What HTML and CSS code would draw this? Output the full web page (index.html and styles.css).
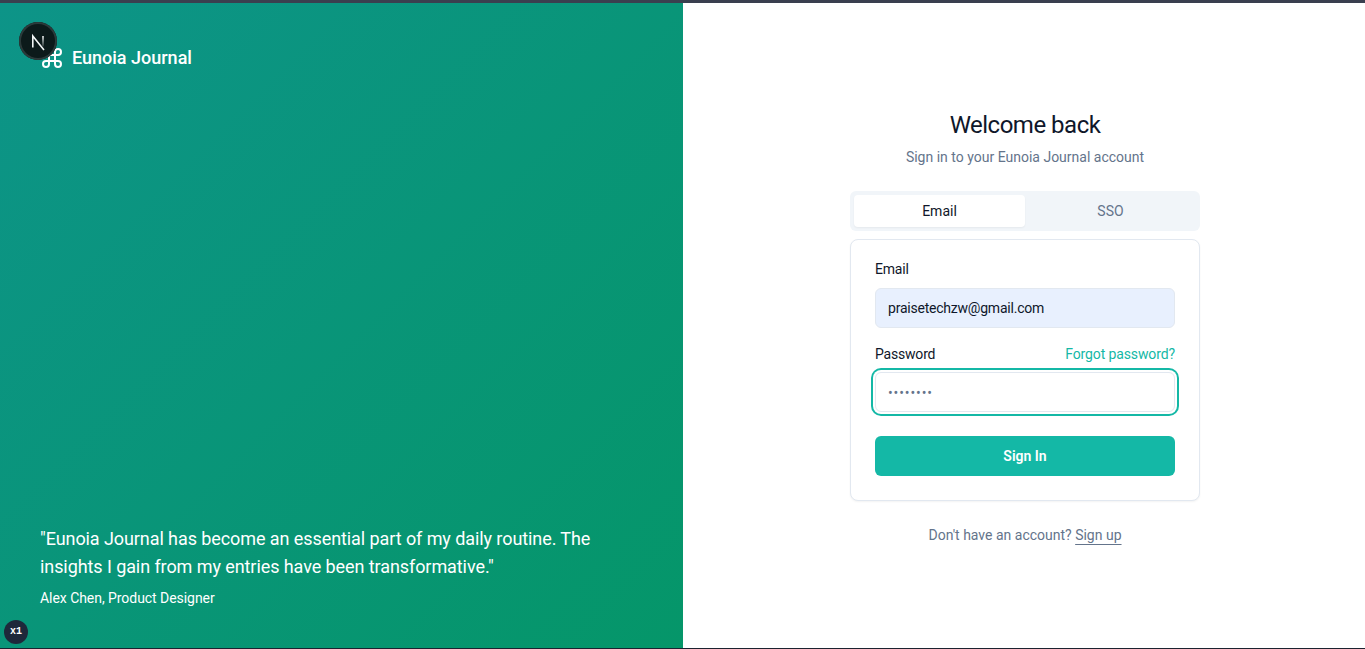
FILE: index.html
```
<!DOCTYPE html>
<html lang="en">
<head>
    <meta charset="UTF-8">
    <meta name="viewport" content="width=device-width, initial-scale=1.0">
    <title>Sign In - Eunoia Journal</title>
    <link rel="stylesheet" href="styles.css">
</head>
<body>
    <div class="page">
        <aside class="hero">
            <div class="brand">
                <svg class="brand-icon" viewBox="0 0 24 24" fill="none" stroke="currentColor" stroke-width="2" stroke-linecap="round" stroke-linejoin="round">
                    <path d="M15 6v12a3 3 0 1 0 3-3H6a3 3 0 1 0 3 3V6a3 3 0 1 0-3 3h12a3 3 0 1 0-3-3"></path>
                </svg>
                <span>Eunoia Journal</span>
            </div>
            <blockquote class="quote">
                <p>"Eunoia Journal has become an essential part of my daily routine. The insights I gain from my entries have been transformative."</p>
                <footer>Alex Chen, Product Designer</footer>
            </blockquote>
        </aside>
        <main class="panel">
            <div class="login">
                <h1>Welcome back</h1>
                <p class="sub">Sign in to your Eunoia Journal account</p>
                <div class="tabs">
                    <button class="tab active">Email</button>
                    <button class="tab">SSO</button>
                </div>
                <form class="card">
                    <label class="label" for="email">Email</label>
                    <input class="input filled" id="email" type="email" value="praisetechzw@gmail.com">
                    <div class="label-row">
                        <label class="label" for="password">Password</label>
                        <a class="forgot" href="#">Forgot password?</a>
                    </div>
                    <input class="input focused" id="password" type="password" value="password">
                    <button class="submit" type="button">Sign In</button>
                </form>
                <p class="signup">Don't have an account? <a href="#">Sign up</a></p>
            </div>
        </main>
    </div>
    <button class="next-badge" aria-label="Next.js dev tools">
        <svg viewBox="0 0 38 38" fill="none" stroke-width="1.6">
            <defs>
                <linearGradient id="next-fade" x1="0" y1="0" x2="0" y2="1">
                    <stop offset="0" stop-color="#f2f6f6"></stop>
                    <stop offset="1" stop-color="#f2f6f6" stop-opacity="0.15"></stop>
                </linearGradient>
            </defs>
            <path d="M13.8 25.5V14L25 28" stroke="#f2f6f6"></path>
            <rect x="23.2" y="14" width="1.6" height="10.5" fill="url(#next-fade)" stroke="none"></rect>
        </svg>
    </button>
    <div class="zoom-badge">x1</div>
</body>
</html>
```

FILE: styles.css
```
* {
    box-sizing: border-box;
}
html, body {
    height: 100%;
}
body {
    margin: 0;
    border-top: 3px solid #3a3f4f;
    border-bottom: 1px solid #1c2230;
    font-family: Roboto, "Noto Sans", sans-serif;
    color: #0f172a;
    background: #fff;
    overflow: hidden;
}
.page {
    display: flex;
    height: 100%;
}
.hero {
    width: 683px;
    padding: 40px;
    display: flex;
    flex-direction: column;
    justify-content: space-between;
    color: #fff;
    background: linear-gradient(135deg, #0d9488, #059669);
}
.brand {
    display: flex;
    align-items: center;
    gap: 8px;
    font-size: 18px;
    font-weight: 500;
    line-height: 28px;
}
.brand span {
    padding-top: 1px;
}
.brand-icon {
    width: 24px;
    height: 24px;
}
.quote {
    margin: 0;
}
.quote p {
    margin: 0 0 7px;
    font-size: 18px;
    line-height: 28px;
    letter-spacing: -0.08px;
}
.quote footer {
    font-size: 14px;
    line-height: 20px;
    font-weight: 450;
    letter-spacing: -0.05px;
}
.panel {
    flex: 1;
    display: flex;
    align-items: center;
    justify-content: center;
    padding-left: 2px;
}
.login {
    width: 350px;
    margin-top: 1px;
}
h1 {
    margin: 0;
    padding-top: 2px;
    height: 32px;
    font-size: 24px;
    line-height: 32px;
    font-weight: 450;
    letter-spacing: -0.5px;
    text-align: center;
}
.sub {
    margin: 8px 0 24px;
    font-size: 14px;
    line-height: 20px;
    color: #64748b;
    text-align: center;
}
.tabs {
    display: grid;
    grid-template-columns: 1fr 1fr;
    height: 40px;
    padding: 4px;
    background: #f1f5f9;
    border-radius: 6px;
}
.tab {
    border: none;
    background: none;
    border-radius: 4px;
    font: 450 14px Roboto, "Noto Sans", sans-serif;
    color: #64748b;
}
.tab.active {
    background: #fff;
    color: #0f172a;
    box-shadow: 0 1px 2px rgba(0, 0, 0, 0.05);
}
.card {
    margin-top: 8px;
    padding: 22px 24px 24px;
    border: 1px solid #e2e8f0;
    border-radius: 8px;
    background: #fff;
    box-shadow: 0 1px 2px rgba(0, 0, 0, 0.05);
}
.label {
    display: block;
    font-size: 14px;
    line-height: 14px;
    font-weight: 450;
    letter-spacing: -0.2px;
}
.label-row {
    display: flex;
    justify-content: space-between;
    align-items: center;
    margin-top: 16px;
}
.forgot {
    font-size: 14px;
    line-height: 20px;
    letter-spacing: -0.12px;
    color: #14b8a6;
    text-decoration: none;
}
.input {
    display: block;
    width: 100%;
    height: 40px;
    margin-top: 12px;
    padding: 0 12px;
    border: 1px solid #e2e8f0;
    border-radius: 6px;
    font: 14px Roboto, "Noto Sans", sans-serif;
    color: #0f172a;
    outline: none;
}
.filled {
    background: #e8f0fe;
    letter-spacing: -0.22px;
}
.focused {
    margin-top: 8px;
    padding-top: 1px;
    letter-spacing: 0.9px;
    box-shadow: 0 0 0 2px #fff, 0 0 0 4px #14b8a6;
    color: #64748b;
}
.submit {
    display: block;
    width: 100%;
    height: 40px;
    margin-top: 24px;
    border: none;
    border-radius: 6px;
    background: #14b8a6;
    color: #fff;
    font: 600 14px Roboto, "Noto Sans", sans-serif;
}
.signup {
    margin: 24px 0 0;
    font-size: 14px;
    line-height: 20px;
    color: #64748b;
    text-align: center;
}
.signup a {
    color: #64748b;
    text-decoration: underline;
    text-underline-offset: 4px;
}
.next-badge {
    position: fixed;
    left: 19px;
    top: 22px;
    width: 38px;
    height: 38px;
    padding: 0;
    border: none;
    border-radius: 50%;
    background: #0c1a1a;
    box-shadow: inset 0 0 0 2px #2b3a3a;
}
.next-badge svg {
    display: block;
    width: 38px;
    height: 38px;
}
.zoom-badge {
    position: fixed;
    left: 4px;
    top: 620px;
    width: 24px;
    height: 24px;
    border-radius: 50%;
    background: #1e293b;
    color: #fff;
    font: 700 10px/24px "Liberation Mono", monospace;
    text-align: center;
}
```
